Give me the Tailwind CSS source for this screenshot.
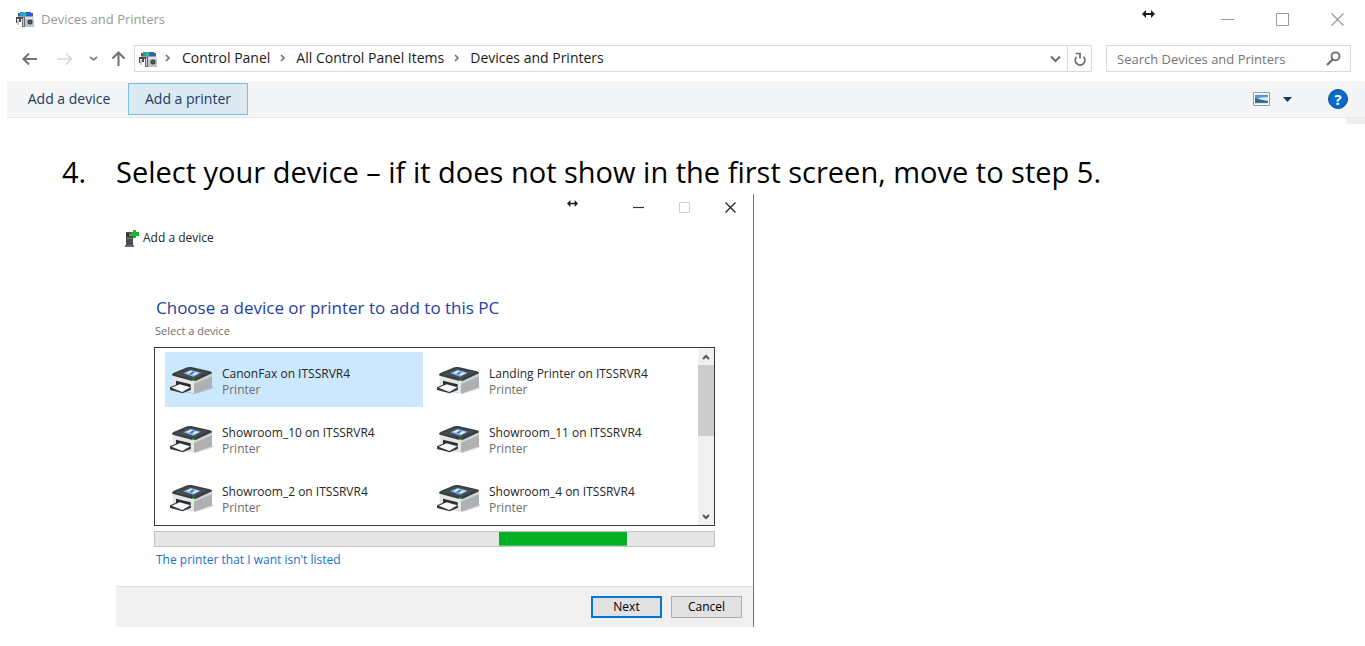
<!DOCTYPE html>
<html lang="en">
<head>
<meta charset="utf-8">
<meta name="viewport" content="width=device-width, initial-scale=1">
<title>Devices and Printers</title>
<script src="https://cdn.jsdelivr.net/npm/@tailwindcss/browser@4"></script>
</head>
<body class="bg-white font-['Open_Sans','Noto_Sans',sans-serif]">
<svg class="hidden" aria-hidden="true">
  <symbol id="devices" viewBox="0 0 19 16">
    <path d="M3 4 6 1h9l3 3v3H3z" fill="#9aa0a4"/>
    <path d="M5 1h5v4H5z" fill="#1b9be8"/><path d="M8 1h3v3H8z" fill="#43c53c"/><path d="M11 1h5v4h-5z" fill="#1f62e0"/>
    <path d="M3 2h2v3H3zM16 2h2v3h-2z" fill="#5a5f64"/>
    <path d="M1 6h8v2H6v3H4V8H2v4H1z" fill="#4a4a4c"/>
    <path d="M2 9h2v5H2z" fill="#c4c6c8"/>
    <path d="M7 6h3v10H7z" fill="#6a6a6c"/><path d="M8 7h1v8H8z" fill="#c9cacc"/>
    <path d="M10 6h9v10h-9z" fill="#bcc2c6"/><path d="M10 6h9v2h-9z" fill="#dde1e4"/>
    <circle cx="15" cy="11" r="2.500" fill="#34424a"/><circle cx="15" cy="11" r="1" fill="#54796f"/>
  </symbol>
  <symbol id="printer" viewBox="0 0 132 84">
    <path d="M30 76 76 84l50-16 6-4-8-4z" fill="#000" opacity=".15"/>
    <path d="M8 28 72 44v38L8 66z" fill="#e6e6e7"/>
    <path d="M72 44 126 22v42L76 82h-4z" fill="#aeb0b2"/>
    <path d="M72 44 126 22v9L72 54z" fill="#d0d2d3"/>
    <path d="M6 26q0-3 6-6L52 4q6-2 12-1l56 13q7 2 6 6L78 44q-5 2-11 1L11 30q-5-1-5-4z" fill="#373e42"/>
    <path d="M14 25 58 7l56 12-42 20z" fill="#454d51"/>
    <path d="M40 22 62 12l30 8-22 12z" fill="#8bb8ea"/>
    <path d="m50 20 12-6 5 2-10 7zM67 25l12-6 7 2-13 7z" fill="#e1f1fb"/>
    <path d="m58 24 10-7 5 2-9 7z" fill="#3479cf"/>
    <path d="M66 41h8v4h-8z" fill="#37ba3c"/>
    <path d="M18 44 62 55v16l-44-9z" fill="#292e31"/>
    <path d="M0 64 18 56l44 10v6L38 82 0 72z" fill="#343a3e"/>
    <path d="m5 65 24-10 32 9-24 14z" fill="#f9fafb"/>
  </symbol>
  <symbol id="resize" viewBox="0 0 13 8">
    <path d="M0 4 4 0v3h5V0l4 4-4 4V5H4v3z" fill="#1c1c1c"/>
  </symbol>
</svg>

<header>
  <div class="flex h-[38px] items-center pl-[15px] pr-[21px]">
    <svg class="mr-[7px] h-4 w-[19px]"><use href="#devices"/></svg>
    <span class="grow text-[13px] leading-5 text-[#999]">Devices and Printers</span>
    <svg class="mr-[66px] h-2 w-[13px] self-start mt-[10px]"><use href="#resize"/></svg>
    <button aria-label="Minimize" class="mr-[42px]"><svg class="h-[13px] w-[13px]" viewBox="0 0 13 13"><path d="M0 6.500h13" stroke="#999"/></svg></button>
    <button aria-label="Maximize" class="mr-[42px]"><svg class="h-[13px] w-[13px]" viewBox="0 0 13 13"><path d="M.5.5h12v12H.5z" fill="none" stroke="#999"/></svg></button>
    <button aria-label="Close"><svg class="h-[13px] w-[13px]" viewBox="0 0 13 13"><path d="M.5.5l12 12M12.500.5l-12 12" stroke="#999" stroke-width="1.200"/></svg></button>
  </div>

  <div class="mt-[7px] flex h-[27px] items-center pl-[22px] pr-[14px]">
    <button aria-label="Back" class="mr-5"><svg class="h-[14px] w-[15px]" viewBox="0 0 15 14"><path d="M1.500 7H15M7 1.500 1.500 7 7 12.500" fill="none" stroke="#737373" stroke-width="2"/></svg></button>
    <button aria-label="Forward" class="mr-4"><svg class="h-[14px] w-4" viewBox="0 0 16 14"><path d="M0 7h14.500M9 1.500 14.500 7 9 12.500" fill="none" stroke="#d5d5d5" stroke-width="1.600"/></svg></button>
    <button aria-label="Recent locations" class="mr-[13px]"><svg class="h-[6px] w-[9px]" viewBox="0 0 9 6"><path d="m1 1 3.500 3L8 1" fill="none" stroke="#7c7c7c" stroke-width="1.700"/></svg></button>
    <button aria-label="Up" class="mr-2"><svg class="h-[15px] w-[15px]" viewBox="0 0 15 15"><path d="M7.500 1.500V15M1.500 7.500l6-6 6 6" fill="none" stroke="#737373" stroke-width="2"/></svg></button>
    <div class="flex h-[27px] min-w-0 grow items-center border border-[#d9d9d9] pl-[3px]">
      <svg class="h-4 w-[19px]"><use href="#devices"/></svg>
      <nav aria-label="Breadcrumb" class="flex grow items-center pb-px text-[14px] leading-5 text-[#1a1a1a]">
        <svg class="ml-2 mr-[11px] h-2 w-[6px]" viewBox="0 0 6 8"><path d="m1 1 3 3-3 3" fill="none" stroke="#707070" stroke-width="1.600"/></svg>
        <a href="#">Control Panel</a>
        <svg class="mx-[10px] h-2 w-[6px]" viewBox="0 0 6 8"><path d="m1 1 3 3-3 3" fill="none" stroke="#707070" stroke-width="1.600"/></svg>
        <a href="#">All Control Panel Items</a>
        <svg class="mx-[10px] h-2 w-[6px]" viewBox="0 0 6 8"><path d="m1 1 3 3-3 3" fill="none" stroke="#707070" stroke-width="1.600"/></svg>
        <a href="#">Devices and Printers</a>
      </nav>
      <button aria-label="Previous locations" class="mr-[6px]"><svg class="h-2 w-[11px]" viewBox="0 0 11 8"><path d="m1 1.500 4.500 4.500L10 1.500" fill="none" stroke="#6b6b6b" stroke-width="2"/></svg></button>
      <button aria-label="Refresh" class="flex h-full w-6 items-center justify-center border-l border-[#d9d9d9]"><svg class="h-[14px] w-3" viewBox="0 0 12 14"><path d="M9.500 4.800A4.800 4.800 0 1 1 2.500 5" fill="none" stroke="#6b6b6b" stroke-width="1.800"/><path d="M1.500 1.500H6v5" fill="none" stroke="#6b6b6b" stroke-width="1.700"/></svg></button>
    </div>
    <div class="ml-[14px] flex h-[27px] w-[245px] items-center border border-[#d9d9d9] pl-[10px] pr-[9px]">
      <input type="text" aria-label="Search Devices and Printers" placeholder="Search Devices and Printers" class="min-w-0 grow text-[13px] leading-5 outline-none placeholder:text-[#757575]">
      <svg class="h-[15px] w-[15px]" viewBox="0 0 15 15"><circle cx="9.500" cy="5.300" r="4" fill="none" stroke="#6b6b6b" stroke-width="1.800"/><path d="M6.800 8.200 1 14" stroke="#6b6b6b" stroke-width="2.200"/></svg>
    </div>
  </div>

  <div class="ml-[7px] mt-[9px] flex h-[37px] items-center border-b border-[#e5e7e9] bg-[#f4f5f7] pl-[3px] pr-[17px] text-[14px] leading-5 text-[#1e395b]">
    <button class="h-8 w-[118px] pb-px">Add a device</button>
    <button class="h-8 w-[120px] border border-[#7abfe5] bg-[#dbe9f3] pb-px">Add a printer</button>
    <button aria-label="Change your view" class="ml-auto mr-[13px]"><svg class="h-[14px] w-[17px]" viewBox="0 0 17 14"><path d="M.5.5h16v13H.5z" fill="#fff" stroke="#999b9e"/><path d="M2 2h13v10H2z" fill="#dcebf7"/><path d="M2 3h13v2q-7 0-13 2z" fill="#4f97e0"/><path d="M2 6q6 2 13 3v2H2z" fill="#2f6f72"/><path d="M2 10q7-1 13 0v1H2z" fill="#3c6fb0"/></svg></button>
    <button aria-label="More view options" class="mr-9"><svg class="h-[5px] w-[9px]" viewBox="0 0 9 5"><path d="M0 0h9L4.500 5z" fill="#1e395b"/></svg></button>
    <button aria-label="Help" class="flex h-5 w-5 items-center justify-center rounded-full border border-[#0a4f94] bg-[#0a6ac9] text-[15px] leading-5 font-bold text-white">?</button>
  </div>
  <div class="ml-auto h-[6px] w-[19px] bg-[#efefef]"></div>
</header>

<main>
  <ol start="4" class="flex pl-[62px] pt-[26px] text-[29px] leading-[44px] text-black">
    <li class="flex whitespace-nowrap"><span class="w-[54px]">4.</span><span>Select your device – if it does not show in the first screen, move to step 5.</span></li>
  </ol>

  <section aria-label="Add a device" class="ml-[116px] w-full max-w-[638px] border-r border-[#a352b0] text-xs text-[#262626]">
    <div class="flex h-[27px] items-center pr-[17px]">
      <svg class="ml-auto mr-[55px] mt-[6px] h-[7px] w-[11px] self-start" viewBox="0 0 13 8"><use href="#resize"/></svg>
      <button aria-label="Minimize" class="mr-[35px]"><svg class="h-[11px] w-[11px]" viewBox="0 0 11 11"><path d="M0 5.500h11" stroke="#333" stroke-width="1.200"/></svg></button>
      <button aria-label="Maximize" disabled class="mr-[35px]"><svg class="h-[11px] w-[11px]" viewBox="0 0 11 11"><path d="M.5.5h10v10H.5z" fill="none" stroke="#d0d0d0"/></svg></button>
      <button aria-label="Close"><svg class="h-[11px] w-[11px]" viewBox="0 0 11 11"><path d="m.5.5 10 10M10.500.5l-10 10" stroke="#222" stroke-width="1.300"/></svg></button>
    </div>
    <div class="flex h-[34px] items-center gap-1 pl-[9px]">
      <svg class="h-[17px] w-[14px]" viewBox="0 0 14 17"><path d="M1 2h7v13H1z" fill="#4a4c50"/><path d="M0 15h9v2H0z" fill="#6a6d70"/><path d="M2 4h2v2H2z" fill="#1a1a1c"/><path d="M4 4h2v2H4z" fill="#30d030"/><path d="M2 8h5v1H2z" fill="#777"/><path d="M8 0h3v2h3v4h-3v2H8V6H6V2h2z" fill="#16b821"/></svg>
      <span>Add a device</span>
    </div>

    <div class="pl-[38px] pr-[38px] pt-[41px]">
      <h1 class="pl-[2px] text-[17px] leading-6 text-[#1f3fa5]">Choose a device or printer to add to this PC</h1>
      <p class="pl-px pt-[3px] text-[11px] leading-4 text-[#6d6d6d]">Select a device</p>

      <div class="mt-2 flex h-[179px] overflow-hidden border border-[#3a3a3a]">
        <ul class="grid grow auto-rows-[55px] grid-cols-2 gap-x-[9px] gap-y-1 pl-[10px] pr-2 pt-1 leading-4">
          <li><button class="flex h-full w-full items-center bg-[#cce8ff] pl-[5px] text-left"><svg class="mr-2 h-7 w-11"><use href="#printer"/></svg><span class="flex flex-col pt-1"><span>CanonFax on ITSSRVR4</span><span class="text-[#6d6d6d]">Printer</span></span></button></li>
          <li><button class="flex h-full w-full items-center pl-[5px] text-left"><svg class="mr-2 h-7 w-11"><use href="#printer"/></svg><span class="flex flex-col pt-1"><span>Landing Printer on ITSSRVR4</span><span class="text-[#6d6d6d]">Printer</span></span></button></li>
          <li><button class="flex h-full w-full items-center pl-[5px] text-left"><svg class="mr-2 h-7 w-11"><use href="#printer"/></svg><span class="flex flex-col pt-1"><span>Showroom_10 on ITSSRVR4</span><span class="text-[#6d6d6d]">Printer</span></span></button></li>
          <li><button class="flex h-full w-full items-center pl-[5px] text-left"><svg class="mr-2 h-7 w-11"><use href="#printer"/></svg><span class="flex flex-col pt-1"><span>Showroom_11 on ITSSRVR4</span><span class="text-[#6d6d6d]">Printer</span></span></button></li>
          <li><button class="flex h-full w-full items-center pl-[5px] text-left"><svg class="mr-2 h-7 w-11"><use href="#printer"/></svg><span class="flex flex-col pt-1"><span>Showroom_2 on ITSSRVR4</span><span class="text-[#6d6d6d]">Printer</span></span></button></li>
          <li><button class="flex h-full w-full items-center pl-[5px] text-left"><svg class="mr-2 h-7 w-11"><use href="#printer"/></svg><span class="flex flex-col pt-1"><span>Showroom_4 on ITSSRVR4</span><span class="text-[#6d6d6d]">Printer</span></span></button></li>
        </ul>
        <div class="flex w-4 flex-col items-center bg-[#f0f0f0]">
          <button aria-label="Scroll up" class="flex h-[17px] w-full items-center justify-center"><svg class="h-[6px] w-2" viewBox="0 0 8 6"><path d="m1 5 3-3 3 3" fill="none" stroke="#555" stroke-width="2"/></svg></button>
          <div class="h-[71px] w-full bg-[#cdcdcd]"></div>
          <button aria-label="Scroll down" class="mt-auto flex h-[17px] w-full items-center justify-center"><svg class="h-[6px] w-2" viewBox="0 0 8 6"><path d="m1 1 3 3 3-3" fill="none" stroke="#555" stroke-width="2"/></svg></button>
        </div>
      </div>

      <div role="progressbar" aria-label="Searching for devices" class="mt-[5px] h-4 border border-[#c4c4c4] bg-[#e6e6e6]">
        <div class="ml-[344px] h-full w-32 border-b border-[#4cc662] bg-[#06b025]"></div>
      </div>
      <a href="#" class="mt-1 ml-[2px] block w-fit leading-[18px] text-[#1a70d2]">The printer that I want isn't listed</a>
    </div>

    <footer class="mt-[17px] flex h-[41px] items-center justify-end gap-[9px] border-t border-[#dfdfdf] bg-[#f0f0f0] pr-[11px] leading-4 text-black">
      <button class="h-[22px] w-[71px] border-2 border-[#0078d7] bg-[#e1e1e1]">Next</button>
      <button class="h-[22px] w-[71px] border border-[#adadad] bg-[#e1e1e1]">Cancel</button>
    </footer>
  </section>
</main>
</body>
</html>
